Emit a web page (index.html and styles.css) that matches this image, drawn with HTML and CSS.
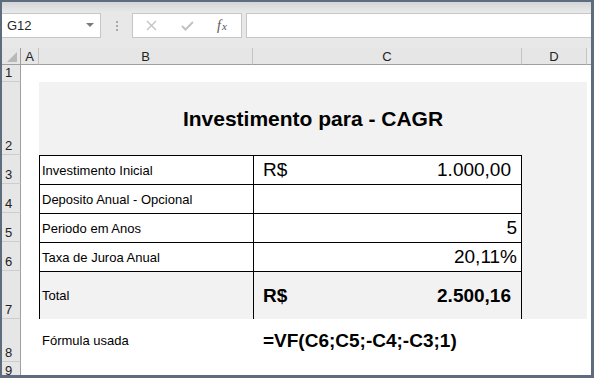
FILE: index.html
```html
<!DOCTYPE html>
<html lang="pt-BR">

<head>
    <meta charset="UTF-8">
    <meta name="viewport" content="width=device-width, initial-scale=1.0">
    <title>Investimento para - CAGR</title>
    <link rel="stylesheet" href="styles.css">
</head>

<body>
    <div class="window">
        <div class="toolbar">
            <div class="namebox"><span>G12</span><span class="caret"></span></div>
            <div class="grip"><i></i><i></i><i></i></div>
            <div class="actions">
                <svg class="icon" width="11" height="11" viewBox="0 0 11 11">
                    <path d="M1 1 L10 10 M10 1 L1 10" stroke="#c3c3c3" stroke-width="1.4" fill="none"/>
                </svg>
                <svg class="icon" width="13" height="10" viewBox="0 0 13 10">
                    <path d="M1 5 L4.5 8.5 L12 1" stroke="#c3c3c3" stroke-width="2" fill="none"/>
                </svg>
                <span class="fx"><i>f</i><i class="x">x</i></span>
            </div>
            <div class="formula"></div>
        </div>

        <div class="sheet">
            <!-- column headers -->
            <div class="corner"><i class="tri"></i></div>
            <div class="ch">A</div>
            <div class="ch">B</div>
            <div class="ch">C</div>
            <div class="ch">D</div>
            <div class="ch edge"></div>

            <!-- row 1 -->
            <div class="rh">1</div>
            <div class="wide"></div>

            <!-- row 2 -->
            <div class="rh">2</div>
            <div></div>
            <div class="title">Investimento para - CAGR</div>
            <div></div>

            <!-- row 3 -->
            <div class="rh">3</div>
            <div></div>
            <div class="lbl">Investimento Inicial</div>
            <div class="val acct"><span>R$</span><span>1.000,00</span></div>
            <div class="fill"></div>
            <div></div>

            <!-- row 4 -->
            <div class="rh">4</div>
            <div></div>
            <div class="lbl">Deposito Anual - Opcional</div>
            <div class="val"></div>
            <div class="fill"></div>
            <div></div>

            <!-- row 5 -->
            <div class="rh">5</div>
            <div></div>
            <div class="lbl">Periodo em Anos</div>
            <div class="val num"><span>5</span></div>
            <div class="fill"></div>
            <div></div>

            <!-- row 6 -->
            <div class="rh">6</div>
            <div></div>
            <div class="lbl">Taxa de Juroa Anual</div>
            <div class="val num"><span>20,11%</span></div>
            <div class="fill"></div>
            <div></div>

            <!-- row 7 -->
            <div class="rh">7</div>
            <div></div>
            <div class="lbl total">Total</div>
            <div class="val acct total"><span>R$</span><span>2.500,16</span></div>
            <div class="fill"></div>
            <div></div>

            <!-- row 8 -->
            <div class="rh">8</div>
            <div></div>
            <div class="note">Fórmula usada</div>
            <div class="used">=VF(C6;C5;-C4;-C3;1)</div>

            <!-- row 9, cut off by the window edge -->
            <div class="rh cut">9</div>
            <div class="wide"></div>
        </div>
    </div>
</body>

</html>
```

FILE: styles.css
```css
body {
    margin: 0;
}

.window {
    width: 594px;
    height: 378px;
    box-sizing: border-box;
    border: solid #5f6c7d;
    border-width: 2px 3px 3px 2px;
    background: #fff;
    font-family: "Liberation Sans", Arial, sans-serif;
    color: #000;
    overflow: hidden;
}

/* formula bar strip */
.toolbar {
    height: 46px;
    box-sizing: border-box;
    padding-top: 11px;
    display: flex;
    align-items: flex-start;
    background: linear-gradient(#d2d5d9, #e8e8e8 10px);
}

.namebox {
    width: 99px;
    height: 25px;
    box-sizing: border-box;
    border: 1px solid #c6c6c6;
    border-left: none;
    background: #fff;
    display: flex;
    align-items: center;
    justify-content: space-between;
    padding: 0 6px 1px 5px;
    font-size: 13px;
    color: #262626;
}

.caret {
    width: 0;
    height: 0;
    border-left: 4px solid transparent;
    border-right: 4px solid transparent;
    border-top: 4px solid #7a7a7a;
}

.grip {
    width: 31px;
    height: 25px;
    display: flex;
    flex-direction: column;
    align-items: center;
    justify-content: center;
    gap: 2px;
}

.grip i {
    width: 2px;
    height: 2px;
    background: #a9a9a9;
}

.actions {
    width: 110px;
    height: 25px;
    box-sizing: border-box;
    border: 1px solid #c6c6c6;
    background: #fff;
    display: flex;
    align-items: center;
    padding-left: 13px;
    gap: 24px;
}

.fx {
    font-family: "Liberation Serif", serif;
    font-size: 14px;
    color: #555;
    margin-left: -1px;
}

.fx .x {
    font-size: 11px;
    margin-left: 1px;
}

.formula {
    flex: 1;
    height: 25px;
    margin-left: 4px;
    box-sizing: border-box;
    border: 1px solid #c6c6c6;
    border-right: none;
    background: #fff;
}

/* worksheet */
.sheet {
    display: grid;
    grid-template-columns: 19px 18px 214px 269px 65px 4px;
    grid-template-rows: 17px 17px 73px 29px 29px 29px 29px 48px 43px 13px;
}

.corner,
.ch {
    background: #e6e6e6;
    border-right: 1px solid #c4c4c4;
    border-bottom: 1px solid #9f9f9f;
}

.corner {
    display: flex;
    align-items: flex-end;
    justify-content: flex-end;
    padding: 0 3px 2px 0;
    border-right-color: #9f9f9f;
}

.tri {
    width: 10px;
    height: 10px;
    background: #b8b8b8;
    clip-path: polygon(100% 0, 100% 100%, 0 100%);
}

.ch {
    display: flex;
    align-items: center;
    justify-content: center;
    font-size: 13px;
    color: #222;
}

.ch.edge {
    border-right: none;
    background: #ececec;
}

.rh {
    background: #e6e6e6;
    border-right: 1px solid #9f9f9f;
    border-bottom: 1px solid #cdcdcd;
    display: flex;
    align-items: flex-end;
    padding: 0 0 1px 3px;
    font-size: 13px;
    line-height: 15px;
    color: #222;
    overflow: hidden;
}

.rh.cut {
    align-items: flex-start;
    padding: 1px 0 0 3px;
    border-bottom: none;
}

.wide {
    grid-column: span 5;
}

.fill {
    background: #f2f2f2;
}

.title {
    grid-column: span 3;
    background: #f2f2f2;
    display: flex;
    align-items: center;
    justify-content: center;
    font-weight: bold;
    font-size: 21px;
    padding-top: 1px;
}

.lbl {
    background: #fff;
    border-left: 1px solid #000;
    border-top: 1px solid #000;
    display: flex;
    align-items: center;
    padding-left: 2px;
    font-size: 13px;
}

.val {
    background: #fff;
    border: 1px solid #000;
    border-bottom: none;
    display: flex;
    align-items: center;
    justify-content: space-between;
    padding: 0 10px 0 9px;
    font-size: 19px;
}

.val.num {
    justify-content: flex-end;
    padding-right: 4px;
}

.total {
    background: #f2f2f2;
}

.val.total {
    font-weight: bold;
}

.note {
    display: flex;
    align-items: center;
    padding-left: 3px;
    font-size: 13px;
}

.used {
    grid-column: span 3;
    display: flex;
    align-items: center;
    padding-left: 10px;
    font-weight: bold;
    font-size: 19px;
}
```
